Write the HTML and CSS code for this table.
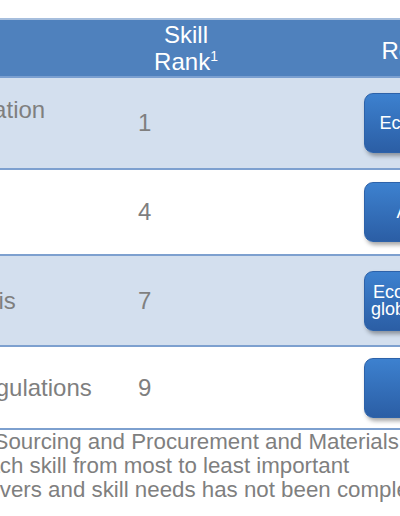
FILE: index.html
```html
<!DOCTYPE html>
<html lang="en">
<head>
<meta charset="utf-8">
<title>Skill ranking</title>
<link rel="stylesheet" href="styles.css">
</head>
<body>
<div class="slide">
  <div class="row head">
    <div class="cell c1">Skill</div>
    <div class="cell c2">Skill<br>Rank<sup>1</sup></div>
    <div class="cell c3 h3">Relevance<sup>2</sup></div>
  </div>
  <div class="row band r1">
    <div class="cell c1">Vendor evaluation<br>&amp; selection</div>
    <div class="cell c2">1</div>
    <div class="cell c3"><div class="btn">Economic cycle</div></div>
  </div>
  <div class="row r2">
    <div class="cell c1">Forecasting</div>
    <div class="cell c2">4</div>
    <div class="cell c3"><div class="btn">Automation</div></div>
  </div>
  <div class="row band r3">
    <div class="cell c1">Spend analysis</div>
    <div class="cell c2">7</div>
    <div class="cell c3"><div class="btn">Economic growth<br>globalization risks</div></div>
  </div>
  <div class="row r4">
    <div class="cell c1">Key import regulations</div>
    <div class="cell c2">9</div>
    <div class="cell c3"><div class="btn">Risk</div></div>
  </div>
</div>
<div class="notes">
  <p>1 Sourcing and Procurement and Materials Management professionals ranked<br>each skill from most to least important</p>
  <p>drivers and skill needs has not been completed</p>
</div>
</body>
</html>
```
FILE: styles.css
```css
html, body {
  margin: 0;
  padding: 0;
}
body {
  width: 400px;
  height: 516px;
  overflow: hidden;
  background: #ffffff;
  font-family: "Liberation Sans", Arial, sans-serif;
}
.slide {
  margin: 18px 0 0 -155px;
  width: 797px;
}
.row {
  display: grid;
  grid-template-columns: 285px 112px 400px;
  align-items: center;
  box-sizing: border-box;
  border-bottom: 2px solid #7da0cf;
  font-size: 24px;
  line-height: 27.5px;
  color: #7f7f7f;
}
.head {
  height: 60px;
  background: #4f81bd;
  border-top: 2px solid #a6bedd;
  border-bottom: 2px solid #7a9fd0;
  color: #ffffff;
}
.band {
  background: #d3dfee;
}
.r1 { height: 92px; }
.r2 { height: 86px; }
.r3 { height: 91px; }
.r4 { height: 83px; }
.cell {
  padding: 0 8px;
  white-space: nowrap;
}
.head .c2 {
  text-align: center;
}
.h3 {
  text-align: center;
  padding-top: 5px;
}
sup {
  font-size: 0.58em;
  line-height: 0;
  vertical-align: super;
}
.c3 {
  display: flex;
  justify-content: center;
}
.btn {
  width: 156px;
  height: 60px;
  box-sizing: border-box;
  border-radius: 9px;
  border: 1px solid #2d62a9;
  background: linear-gradient(#3d81cf, #2b5ea5);
  box-shadow: 2px 3px 4px rgba(0, 0, 0, 0.35);
  color: #ffffff;
  font-size: 18px;
  line-height: 17px;
  display: flex;
  align-items: center;
  justify-content: center;
  text-align: center;
}
.notes {
  margin-left: -25px;
  font-size: 22.3px;
  line-height: 24px;
  color: #7f7f7f;
  white-space: nowrap;
}
.notes p {
  margin: 0;
}
```
